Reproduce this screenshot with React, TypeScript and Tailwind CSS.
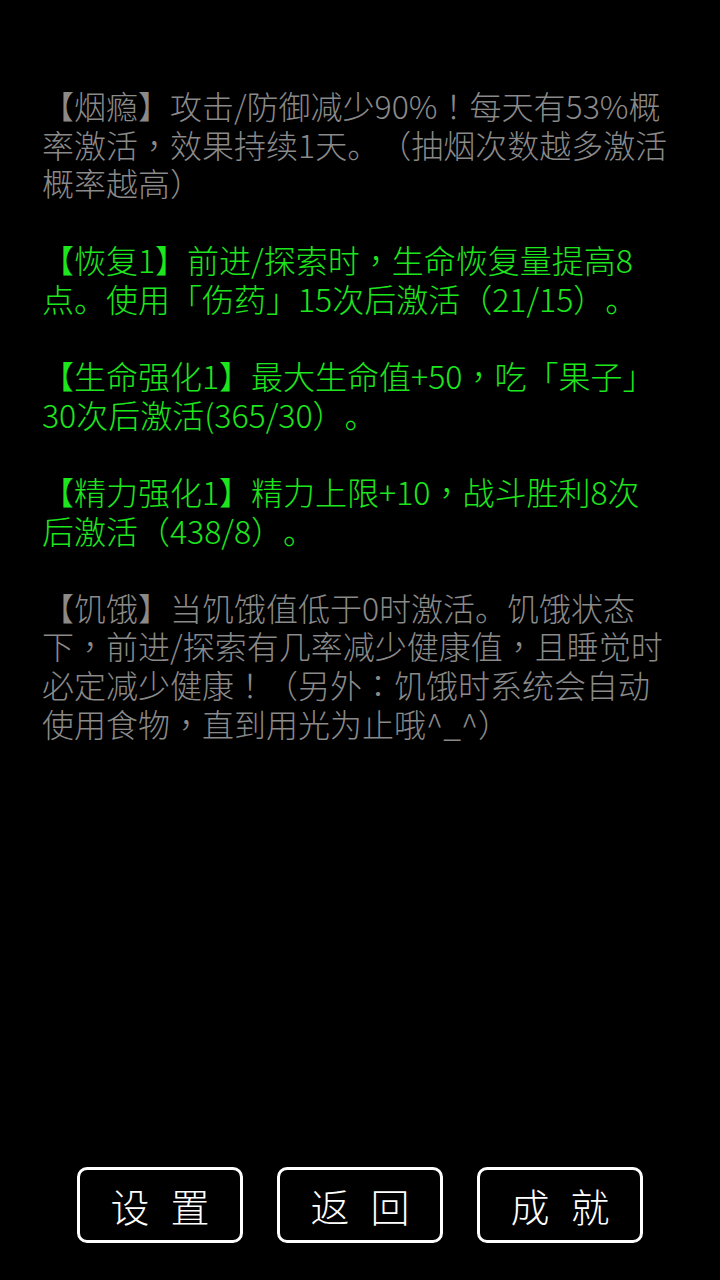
import React from "react";

const GRAY = "text-[#8a8a8a]";
const GREEN = "text-[#1ee61e]";

const paragraphs: { color: string; lines: string[] }[] = [
  {
    color: GRAY,
    lines: [
      "【烟瘾】攻击/防御减少90%！每天有53%概",
      "率激活，效果持续1天。（抽烟次数越多激活",
      "概率越高）",
    ],
  },
  {
    color: GREEN,
    lines: [
      "【恢复1】前进/探索时，生命恢复量提高8",
      "点。使用「伤药」15次后激活（21/15）。",
    ],
  },
  {
    color: GREEN,
    lines: [
      "【生命强化1】最大生命值+50，吃「果子」",
      "30次后激活(365/30）。",
    ],
  },
  {
    color: GREEN,
    lines: ["【精力强化1】精力上限+10，战斗胜利8次", "后激活（438/8）。"],
  },
  {
    color: GRAY,
    lines: [
      "【饥饿】当饥饿值低于0时激活。饥饿状态",
      "下，前进/探索有几率减少健康值，且睡觉时",
      "必定减少健康！（另外：饥饿时系统会自动",
      "使用食物，直到用光为止哦^_^）",
    ],
  },
];

function Line({ text }: { text: string }) {
  const parts = text.split(/([，！：])/);
  return (
    <div className="whitespace-nowrap">
      {parts.map((p, i) =>
        p === "，" || p === "！" || p === "：" ? (
          <span key={i} className="[font-family:'Noto_Sans_CJK_TC',sans-serif]">
            {p}
          </span>
        ) : (
          <React.Fragment key={i}>{p}</React.Fragment>
        )
      )}
    </div>
  );
}

function Btn({ a, b }: { a: string; b: string }) {
  return (
    <div className="w-[166px] h-[76px] border-[3px] border-white rounded-[10px] flex items-center justify-center gap-[21px] text-white text-[39px] leading-none font-light">
      <span>{a}</span>
      <span>{b}</span>
    </div>
  );
}

export default function App() {
  return (
    <div
      className="w-[720px] h-[1280px] bg-black flex flex-col overflow-hidden [text-spacing-trim:space-all]"
      style={{ fontFamily: '"Noto Sans CJK SC", "Noto Sans", sans-serif' }}
    >
      <div className="flex-1 pl-[42px] pt-[86px] flex flex-col gap-[38.6px]">
        {paragraphs.map((p, i) => (
          <div key={i} className={`${p.color} text-[32px] leading-[38.6px] font-light`}>
            {p.lines.map((l, j) => (
              <Line key={j} text={l} />
            ))}
          </div>
        ))}
      </div>
      <div className="flex justify-center gap-[34px] pb-[37px]">
        <Btn a="设" b="置" />
        <Btn a="返" b="回" />
        <Btn a="成" b="就" />
      </div>
    </div>
  );
}
